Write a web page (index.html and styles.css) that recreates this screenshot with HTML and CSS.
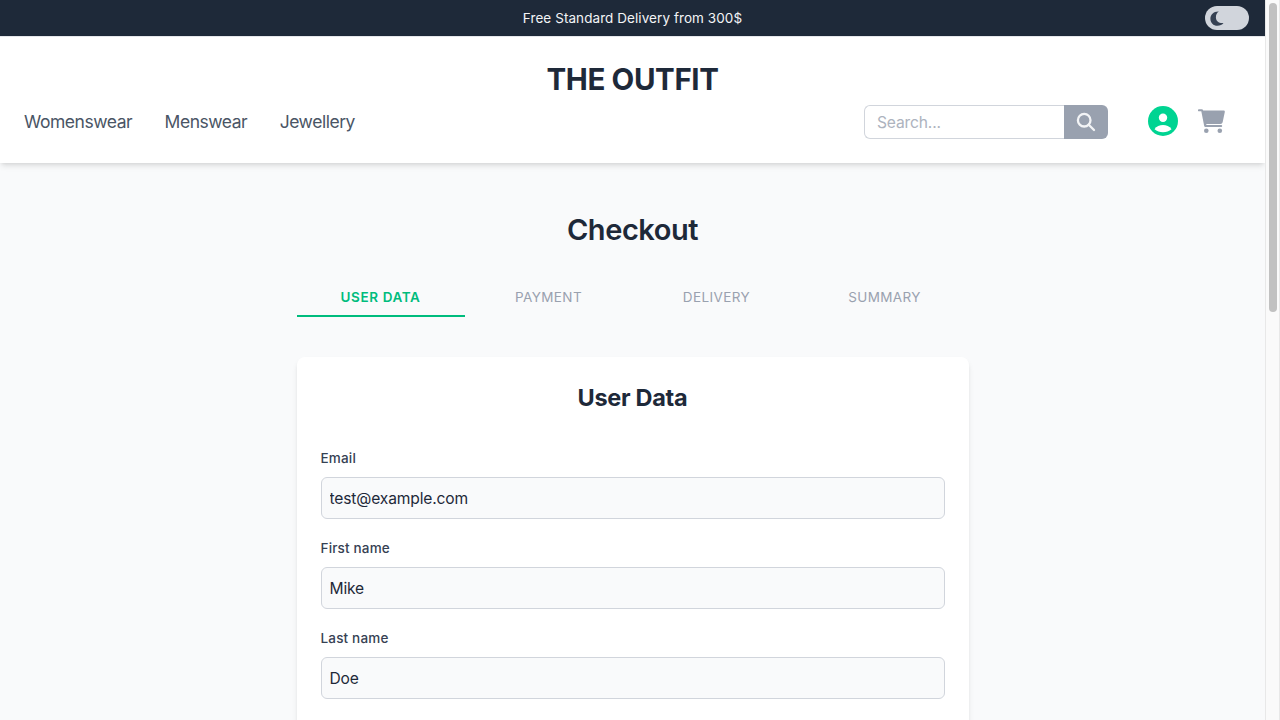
FILE: index.html
```html
<!DOCTYPE html>
<html lang="en">
<head>
<meta charset="utf-8">
<title>Checkout</title>
<link rel="stylesheet" href="styles.css">
</head>
<body>
<div class="viewport">
  <div class="page">
    <div class="topbar">
      <p class="topbar-text">Free Standard Delivery from 300$</p>
      <button class="theme-toggle" aria-label="Dark mode">
        <svg class="moon" viewBox="0 0 15 15"><path d="M8.800.400C3.500.200.400 3.500.400 7.700c0 4.100 3 7.100 7 7.100 2.600 0 4.800-1 6.100-2.800C9 12.500 5.900 10 5.900 6.200 5.900 3.700 6.900 1.700 8.800.400z"/></svg>
      </button>
    </div>
    <header class="header">
      <a class="brand">THE OUTFIT</a>
      <div class="header-row">
        <nav class="nav"><a>Womenswear</a><a>Menswear</a><a>Jewellery</a></nav>
        <div class="tools">
          <form class="search">
            <input class="search-input" placeholder="Search...">
            <button class="search-button" aria-label="Search" type="button">
              <svg viewBox="0 0 20 20"><circle cx="8.2" cy="8.2" r="6.300"/><path d="M13 13l5 5"/></svg>
            </button>
          </form>
          <svg class="user" viewBox="0 0 30 30"><circle class="user-disc" cx="15" cy="15" r="15"/><circle cx="15" cy="11.7" r="4.2"/><path d="M6.500 23.300C8.300 20.300 11.800 19 15 19s6.700 1.300 8.500 4.300C21.200 25.200 18.200 26.200 15 26.200s-6.200-1-8.500-2.900z"/></svg>
          <svg class="cart" viewBox="0 0 27 25"><path d="M.9.300H3.700C4.500.300 5 .700 5.200 1.500H25.500C26.500 1.500 27 2.200 26.800 3.100L24.700 13.100C24.400 14.300 23.600 15 22.400 15H8.200L8.500 16.100H23.200a1 1 0 0 1 0 2H7.700C6.900 18.100 6.400 17.600 6.200 16.900L3.300 2.200H.9A.95.95 0 0 1 .9.300z"/><circle cx="8.300" cy="21.800" r="2.300"/><circle cx="21.800" cy="21.800" r="2.300"/></svg>
        </div>
      </div>
    </header>
    <main class="main">
      <h1 class="title">Checkout</h1>
      <div class="steps">
        <span class="step step-active">User data</span><span class="step">Payment</span><span class="step">Delivery</span><span class="step">Summary</span>
      </div>
      <section class="card">
        <h2 class="card-title">User Data</h2>
        <label class="field"><span class="label">Email</span><input class="input" value="test@example.com"></label>
        <label class="field"><span class="label">First name</span><input class="input" value="Mike"></label>
        <label class="field"><span class="label">Last name</span><input class="input" value="Doe"></label>
      </section>
    </main>
  </div>
  <div class="scrollbar"><div class="thumb"></div></div>
</div>
</body>
</html>
```
FILE: styles.css
```css
* { box-sizing: border-box; margin: 0; padding: 0; }
body { font-family: Inter, sans-serif; font-size: 16px; line-height: 24px; color: #1e2939; overflow: hidden; }
button, input { font: inherit; border: 0; outline: 0; }
.viewport { display: flex; height: 720px; overflow: hidden; }
.page { flex: 1; min-width: 0; background: #f9fafb; overflow: hidden; }
.topbar { position: relative; height: 36px; background: #1e2939; display: flex; align-items: center; justify-content: center; }
.topbar-text { font-size: 13.5px; line-height: 20px; letter-spacing: .07px; color: #f3f4f6; }
.theme-toggle { position: absolute; right: 16px; top: 6px; width: 44px; height: 24px; border-radius: 12px; background: #d1d5dc; display: flex; align-items: center; padding-left: 5px; }
.moon { width: 15px; height: 15px; fill: #364153; }
.header { position: relative; height: 127px; padding: 24px 24px 0; border-top: 1px solid #e5e7eb; background: #fff; box-shadow: 0 4px 6px -1px #0000001a, 0 2px 4px -2px #0000001a; }
.brand { display: block; text-align: center; font-size: 29.5px; line-height: 36px; font-weight: 700; letter-spacing: -.38px; }
.header-row { display: flex; justify-content: space-between; align-items: center; margin-top: 7px; height: 36px; }
.nav { display: flex; gap: 32.4px; font-size: 17.5px; line-height: 28px; letter-spacing: -.46px; color: #4a5565; }
.tools { display: flex; align-items: center; padding-right: 16px; }
.search { display: flex; height: 34px; }
.search-input { width: 200px; border: 1px solid #d1d5dc; border-right: 0; border-radius: 6px 0 0 6px; padding: 1px 12px 0; font-size: 15.6px; letter-spacing: -.15px; }
.search-input::placeholder { color: #99a1af; opacity: .8; }
.search-button { width: 44px; background: #99a1af; border-radius: 0 6px 6px 0; display: flex; align-items: center; justify-content: center; padding-bottom: 1px; }
.search-button svg { width: 20px; height: 20px; fill: none; stroke: #f3f4f6; stroke-width: 2.3; stroke-linecap: round; }
.user { width: 30px; height: 30px; margin: 0 0 2px 40px; fill: #fff; }
.user-disc { fill: #00d492; }
.cart { width: 27px; height: 25px; margin: 0 0 1px 20px; fill: #99a1af; }
.main { width: 672px; margin: 0 auto; padding-top: 49px; }
.title { text-align: center; font-size: 29px; line-height: 36px; font-weight: 600; letter-spacing: -.45px; }
.steps { display: grid; grid-template-columns: repeat(4, 1fr); margin-top: 31px; }
.step { height: 38px; padding-top: 8px; text-align: center; text-transform: uppercase; font-size: 13.5px; line-height: 20px; letter-spacing: .4px; color: #99a1af; }
.step-active { color: #00bc7d; font-weight: 600; letter-spacing: .6px; border-bottom: 2px solid #00bc7d; }
.card { margin-top: 40px; min-height: 500px; padding: 25px 24px 24px; background: #fff; border-radius: 8px; box-shadow: 0 4px 6px -1px #0000001a, 0 2px 4px -2px #0000001a; }
.card-title { text-align: center; font-size: 23.5px; line-height: 32px; font-weight: 700; letter-spacing: -.3px; margin-bottom: 34px; }
.field { display: block; margin-bottom: 19px; }
.label { display: block; font-size: 13.5px; line-height: 20px; font-weight: 500; letter-spacing: .17px; color: #364153; margin-bottom: 9px; }
.input { display: block; width: 100%; height: 42px; padding: 0 8px; border: 1px solid #d1d5dc; border-radius: 6px; background: #f9fafb; color: #1e2939; font-size: 15.6px; letter-spacing: -.15px; }
.scrollbar { width: 15px; padding: 3px 2px 0 3px; background: #fafafa; border-left: 1px solid #e8e8e8; border-right: 1px solid #e8e8e8; }
.thumb { width: 8px; height: 309px; border-radius: 4px; background: #c1c1c1; }
```
